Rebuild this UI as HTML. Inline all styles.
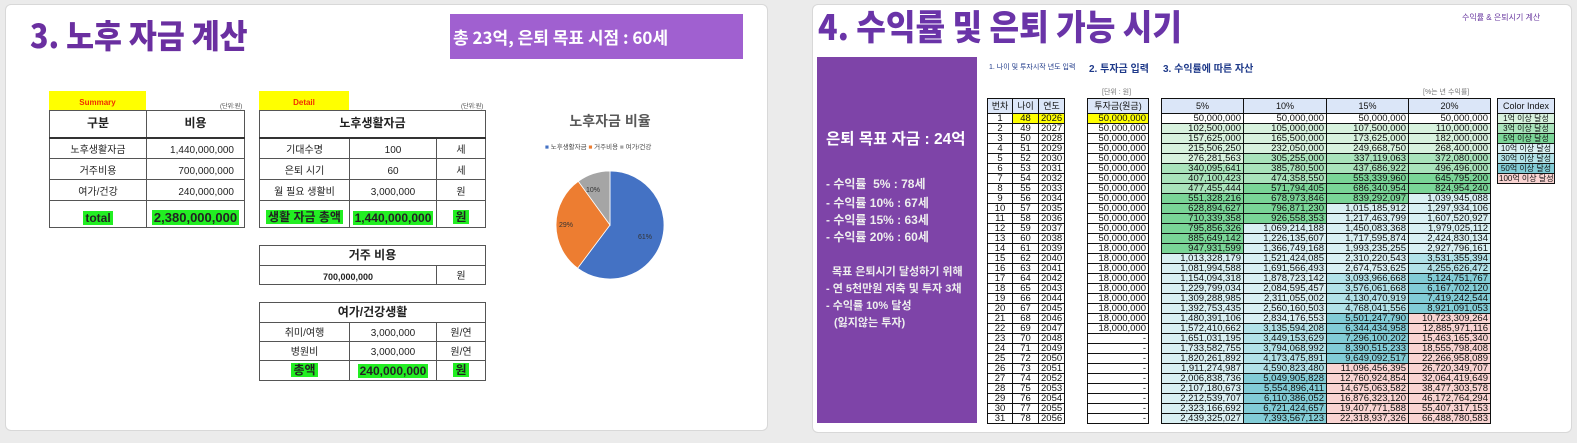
<!DOCTYPE html>
<html><head><meta charset="utf-8"><style>
*{margin:0;padding:0;box-sizing:border-box}
body{width:1577px;height:443px;background:#ebebeb;position:relative;overflow:hidden;font-family:"Liberation Sans","Noto Sans CJK KR",sans-serif}
.card{position:absolute;background:#fff;border:1px solid #d8d8d8;border-radius:6px}
.abs{position:absolute}
table{border-collapse:collapse;position:absolute;table-layout:fixed}
.lt td{border:1px solid #555;font-size:10px;text-align:center;color:#222;vertical-align:bottom;padding-bottom:2px}
.lt .h td{font-weight:bold;font-size:12px;border-bottom:2px solid #333;vertical-align:middle}
.g{background:#22ee22;font-weight:bold;font-size:12px;padding:0 2px}
.rt td{border:1px solid #111;font-size:9.5px;height:10px;line-height:9px;padding:0 2px;color:#111;white-space:nowrap;overflow:hidden}
.rt .hd td{background:#dbe6f8;height:15px;font-size:9px;text-align:center;border:1.5px solid #111}
.c td{text-align:center}
.r td{text-align:right}
.y{background:#ffff00}
.a{background:#d8f2de}.b{background:#a9e3bb}.c5{background:#7ad597}.d{background:#d9f0f3}.e{background:#b2e2e8}.f{background:#82ccd6}.p{background:#f9d4d2}
.pl{color:#eee;font-weight:bold;font-size:12px;position:absolute;left:826px;white-space:nowrap}
.ci td{font-size:8px;padding:0 1px}
</style></head><body>
<div class="card" style="left:5px;top:4px;width:763px;height:427px"></div>
<div class="card" style="left:812px;top:4px;width:760px;height:429px"></div>

<div class="abs" style="left:30px;top:12px;font-size:33px;font-weight:900;color:#6a2fa0;font-family:'Noto Sans CJK KR',sans-serif;transform:scaleX(.92);transform-origin:left;white-space:nowrap;line-height:44px">3. 노후 자금 계산</div>
<div class="abs" style="left:450px;top:14px;width:293px;height:45px;background:#a060d0;color:#fff;font-weight:bold;font-size:17px;line-height:45px;padding-left:3px;white-space:nowrap;font-family:'Noto Sans CJK KR',sans-serif">총 23억, 은퇴 목표 시점 : 60세</div>

<div class="abs" style="left:49px;top:91px;width:97px;height:19px;background:#ff0;color:#f03000;font-size:8px;font-weight:bold;text-align:center;line-height:24px">Summary</div>
<div class="abs" style="left:220px;top:101px;font-size:6px;color:#444">(단위:원)</div>
<table class="lt" style="left:49px;top:110px;width:195px">
<col style="width:97px"><col style="width:98px">
<tr class="h" style="height:27px"><td>구분</td><td>비용</td></tr>
<tr style="height:21px"><td>노후생활자금</td><td style="text-align:right;padding-right:10px">1,440,000,000</td></tr>
<tr style="height:21px"><td>거주비용</td><td style="text-align:right;padding-right:10px">700,000,000</td></tr>
<tr style="height:21px"><td>여가/건강</td><td style="text-align:right;padding-right:10px">240,000,000</td></tr>
<tr style="height:27px"><td><span class="g">total</span></td><td><span class="g" style="font-size:13px">2,380,000,000</span></td></tr>
</table>

<div class="abs" style="left:259px;top:91px;width:90px;height:19px;background:#ff0;color:#f03000;font-size:8px;font-weight:bold;text-align:center;line-height:24px">Detail</div>
<div class="abs" style="left:461px;top:101px;font-size:6px;color:#444">(단위:원)</div>
<table class="lt" style="left:259px;top:110px;width:226px">
<col style="width:90px"><col style="width:87px"><col style="width:49px">
<tr class="h" style="height:27px"><td colspan="3">노후생활자금</td></tr>
<tr style="height:21px"><td>기대수명</td><td>100</td><td>세</td></tr>
<tr style="height:21px"><td>은퇴 시기</td><td>60</td><td>세</td></tr>
<tr style="height:21px"><td>월 필요 생활비</td><td>3,000,000</td><td>원</td></tr>
<tr style="height:27px"><td><span class="g">생활 자금 총액</span></td><td><span class="g">1,440,000,000</span></td><td><span class="g">원</span></td></tr>
</table>

<table class="lt" style="left:259px;top:245px;width:226px">
<col style="width:177px"><col style="width:49px">
<tr style="height:19px"><td colspan="2" style="font-weight:bold;font-size:12px">거주 비용</td></tr>
<tr style="height:19px"><td style="font-weight:bold;font-size:9px">700,000,000</td><td>원</td></tr>
</table>

<table class="lt" style="left:259px;top:302px;width:226px">
<col style="width:90px"><col style="width:87px"><col style="width:49px">
<tr style="height:20px"><td colspan="3" style="font-weight:bold;font-size:12px">여가/건강생활</td></tr>
<tr style="height:19px"><td>취미/여행</td><td>3,000,000</td><td>원/연</td></tr>
<tr style="height:19px"><td>병원비</td><td>3,000,000</td><td>원/연</td></tr>
<tr style="height:20px"><td><span class="g">총액</span></td><td><span class="g">240,000,000</span></td><td><span class="g">원</span></td></tr>
</table>

<div class="abs" style="left:540px;top:111px;width:140px;text-align:center;font-size:14px;font-weight:bold;color:#595959">노후자금 비율</div>
<div class="abs" style="left:545px;top:141px;font-size:6.5px;color:#444;white-space:nowrap"><span style="color:#4472c4">■</span> 노후생활자금 <span style="color:#ed7d31">■</span> 거주비용 <span style="color:#a5a5a5">■</span> 여가/건강</div>
<svg class="abs" style="left:550px;top:165px" width="120" height="120" viewBox="0 0 120 120">
<path d="M60 60 L60 6 A54 54 0 1 1 27.6 103.2 Z" fill="#4472c4" stroke="#fff" stroke-width=".8"/>
<path d="M60 60 L27.6 103.2 A54 54 0 0 1 28.3 16.3 Z" fill="#ed7d31" stroke="#fff" stroke-width=".8"/>
<path d="M60 60 L28.3 16.3 A54 54 0 0 1 60 6 Z" fill="#a5a5a5" stroke="#fff" stroke-width=".8"/>
<text x="88" y="74" font-size="7" fill="#333" font-family="Liberation Sans">61%</text>
<text x="9" y="62" font-size="7" fill="#333" font-family="Liberation Sans">29%</text>
<text x="36" y="27" font-size="7" fill="#333" font-family="Liberation Sans">10%</text>
</svg>

<div class="abs" style="left:818px;top:4px;font-size:35px;font-weight:900;color:#6a34a8;font-family:'Noto Sans CJK KR',sans-serif;white-space:nowrap;line-height:44px;transform:scaleX(.92);transform-origin:left">4. 수익률 및 은퇴 가능 시기</div>
<div class="abs" style="left:1462px;top:12px;font-size:8px;color:#6a3aa0;white-space:nowrap">수익률 &amp; 은퇴시기 계산</div>

<div class="abs" style="left:817px;top:57px;width:160px;height:366px;background:#7e44a8"></div>
<div class="pl" style="top:127px;font-size:15.5px;color:#fff">은퇴 목표 자금 : 24억</div>
<div class="pl" style="top:175px">- 수익률&nbsp;&nbsp;5% : 78세</div>
<div class="pl" style="top:194px">- 수익률 10% : 67세</div>
<div class="pl" style="top:211px">- 수익률 15% : 63세</div>
<div class="pl" style="top:228px">- 수익률 20% : 60세</div>
<div class="pl" style="top:263px;left:832px;font-size:11px">목표 은퇴시기 달성하기 위해</div>
<div class="pl" style="top:280px;font-size:11px">- 연 5천만원 저축 및 투자 3채</div>
<div class="pl" style="top:297px;font-size:11px">- 수익률 10% 달성</div>
<div class="pl" style="top:314px;left:834px;font-size:11px">(잃지않는 투자)</div>

<div class="abs" style="left:989px;top:62px;font-size:7px;color:#1f3a8a;white-space:nowrap">1. 나이 및 투자시작 년도 입력</div>
<div class="abs" style="left:1089px;top:60px;font-size:10px;font-weight:bold;color:#1f3a8a;white-space:nowrap">2. 투자금 입력</div>
<div class="abs" style="left:1163px;top:60px;font-size:10px;font-weight:bold;color:#1f3a8a;white-space:nowrap">3. 수익률에 따른 자산</div>
<div class="abs" style="left:1102px;top:87px;font-size:7px;color:#777">[단위 : 원]</div>
<div class="abs" style="left:1423px;top:87px;font-size:7px;color:#777">[%는 년 수익률]</div>

<table class="rt c" style="left:987px;top:98px;width:77px">
<col style="width:25px"><col style="width:26px"><col style="width:26px">
<tr class="hd"><td>번차</td><td>나이</td><td>연도</td></tr>
<tr><td>1</td><td class="y">48</td><td class="y">2026</td></tr>
<tr><td>2</td><td>49</td><td>2027</td></tr><tr><td>3</td><td>50</td><td>2028</td></tr><tr><td>4</td><td>51</td><td>2029</td></tr><tr><td>5</td><td>52</td><td>2030</td></tr><tr><td>6</td><td>53</td><td>2031</td></tr><tr><td>7</td><td>54</td><td>2032</td></tr><tr><td>8</td><td>55</td><td>2033</td></tr><tr><td>9</td><td>56</td><td>2034</td></tr><tr><td>10</td><td>57</td><td>2035</td></tr><tr><td>11</td><td>58</td><td>2036</td></tr><tr><td>12</td><td>59</td><td>2037</td></tr><tr><td>13</td><td>60</td><td>2038</td></tr><tr><td>14</td><td>61</td><td>2039</td></tr><tr><td>15</td><td>62</td><td>2040</td></tr><tr><td>16</td><td>63</td><td>2041</td></tr><tr><td>17</td><td>64</td><td>2042</td></tr><tr><td>18</td><td>65</td><td>2043</td></tr><tr><td>19</td><td>66</td><td>2044</td></tr><tr><td>20</td><td>67</td><td>2045</td></tr><tr><td>21</td><td>68</td><td>2046</td></tr><tr><td>22</td><td>69</td><td>2047</td></tr><tr><td>23</td><td>70</td><td>2048</td></tr><tr><td>24</td><td>71</td><td>2049</td></tr><tr><td>25</td><td>72</td><td>2050</td></tr><tr><td>26</td><td>73</td><td>2051</td></tr><tr><td>27</td><td>74</td><td>2052</td></tr><tr><td>28</td><td>75</td><td>2053</td></tr><tr><td>29</td><td>76</td><td>2054</td></tr><tr><td>30</td><td>77</td><td>2055</td></tr><tr><td>31</td><td>78</td><td>2056</td></tr>
</table>

<table class="rt r" style="left:1087px;top:98px;width:62px">
<tr class="hd"><td>투자금(원금)</td></tr>
<tr><td class="y">50,000,000</td></tr>
<tr><td>50,000,000</td></tr><tr><td>50,000,000</td></tr><tr><td>50,000,000</td></tr><tr><td>50,000,000</td></tr><tr><td>50,000,000</td></tr><tr><td>50,000,000</td></tr><tr><td>50,000,000</td></tr><tr><td>50,000,000</td></tr><tr><td>50,000,000</td></tr><tr><td>50,000,000</td></tr><tr><td>50,000,000</td></tr><tr><td>50,000,000</td></tr>
<tr><td>18,000,000</td></tr><tr><td>18,000,000</td></tr><tr><td>18,000,000</td></tr><tr><td>18,000,000</td></tr><tr><td>18,000,000</td></tr><tr><td>18,000,000</td></tr><tr><td>18,000,000</td></tr><tr><td>18,000,000</td></tr><tr><td>18,000,000</td></tr>
<tr><td>-</td></tr><tr><td>-</td></tr><tr><td>-</td></tr><tr><td>-</td></tr><tr><td>-</td></tr><tr><td>-</td></tr><tr><td>-</td></tr><tr><td>-</td></tr><tr><td>-</td></tr>
</table>

<table class="rt r" style="left:1161px;top:98px;width:329px">
<col style="width:82px"><col style="width:83px"><col style="width:82px"><col style="width:82px">
<tr class="hd"><td>5%</td><td>10%</td><td>15%</td><td>20%</td></tr>
<tr><td>50,000,000</td><td>50,000,000</td><td>50,000,000</td><td>50,000,000</td></tr>
<tr><td class="a">102,500,000</td><td class="a">105,000,000</td><td class="a">107,500,000</td><td class="a">110,000,000</td></tr>
<tr><td class="a">157,625,000</td><td class="a">165,500,000</td><td class="a">173,625,000</td><td class="a">182,000,000</td></tr>
<tr><td class="a">215,506,250</td><td class="a">232,050,000</td><td class="a">249,668,750</td><td class="a">268,400,000</td></tr>
<tr><td class="a">276,281,563</td><td class="b">305,255,000</td><td class="b">337,119,063</td><td class="b">372,080,000</td></tr>
<tr><td class="b">340,095,641</td><td class="b">385,780,500</td><td class="b">437,686,922</td><td class="b">496,496,000</td></tr>
<tr><td class="b">407,100,423</td><td class="b">474,358,550</td><td class="c5">553,339,960</td><td class="c5">645,795,200</td></tr>
<tr><td class="b">477,455,444</td><td class="c5">571,794,405</td><td class="c5">686,340,954</td><td class="c5">824,954,240</td></tr>
<tr><td class="c5">551,328,216</td><td class="c5">678,973,846</td><td class="c5">839,292,097</td><td class="d">1,039,945,088</td></tr>
<tr><td class="c5">628,894,627</td><td class="c5">796,871,230</td><td class="d">1,015,185,912</td><td class="d">1,297,934,106</td></tr>
<tr><td class="c5">710,339,358</td><td class="c5">926,558,353</td><td class="d">1,217,463,799</td><td class="d">1,607,520,927</td></tr>
<tr><td class="c5">795,856,326</td><td class="d">1,069,214,188</td><td class="d">1,450,083,368</td><td class="d">1,979,025,112</td></tr>
<tr><td class="c5">885,649,142</td><td class="d">1,226,135,607</td><td class="d">1,717,595,874</td><td class="d">2,424,830,134</td></tr>
<tr><td class="c5">947,931,599</td><td class="d">1,366,749,168</td><td class="d">1,993,235,255</td><td class="d">2,927,796,161</td></tr>
<tr><td class="d">1,013,328,179</td><td class="d">1,521,424,085</td><td class="d">2,310,220,543</td><td class="e">3,531,355,394</td></tr>
<tr><td class="d">1,081,994,588</td><td class="d">1,691,566,493</td><td class="d">2,674,753,625</td><td class="e">4,255,626,472</td></tr>
<tr><td class="d">1,154,094,318</td><td class="d">1,878,723,142</td><td class="e">3,093,966,668</td><td class="f">5,124,751,767</td></tr>
<tr><td class="d">1,229,799,034</td><td class="d">2,084,595,457</td><td class="e">3,576,061,668</td><td class="f">6,167,702,120</td></tr>
<tr><td class="d">1,309,288,985</td><td class="d">2,311,055,002</td><td class="e">4,130,470,919</td><td class="f">7,419,242,544</td></tr>
<tr><td class="d">1,392,753,435</td><td class="d">2,560,160,503</td><td class="e">4,768,041,556</td><td class="f">8,921,091,053</td></tr>
<tr><td class="d">1,480,391,106</td><td class="d">2,834,176,553</td><td class="f">5,501,247,790</td><td class="p">10,723,309,264</td></tr>
<tr><td class="d">1,572,410,662</td><td class="e">3,135,594,208</td><td class="f">6,344,434,958</td><td class="p">12,885,971,116</td></tr>
<tr><td class="d">1,651,031,195</td><td class="e">3,449,153,629</td><td class="f">7,296,100,202</td><td class="p">15,463,165,340</td></tr>
<tr><td class="d">1,733,582,755</td><td class="e">3,794,068,992</td><td class="f">8,390,515,233</td><td class="p">18,555,798,408</td></tr>
<tr><td class="d">1,820,261,892</td><td class="e">4,173,475,891</td><td class="f">9,649,092,517</td><td class="p">22,266,958,089</td></tr>
<tr><td class="d">1,911,274,987</td><td class="e">4,590,823,480</td><td class="p">11,096,456,395</td><td class="p">26,720,349,707</td></tr>
<tr><td class="d">2,006,838,736</td><td class="f">5,049,905,828</td><td class="p">12,760,924,854</td><td class="p">32,064,419,649</td></tr>
<tr><td class="d">2,107,180,673</td><td class="f">5,554,896,411</td><td class="p">14,675,063,582</td><td class="p">38,477,303,578</td></tr>
<tr><td class="d">2,212,539,707</td><td class="f">6,110,386,052</td><td class="p">16,876,323,120</td><td class="p">46,172,764,294</td></tr>
<tr><td class="d">2,323,166,692</td><td class="f">6,721,424,657</td><td class="p">19,407,771,588</td><td class="p">55,407,317,153</td></tr>
<tr><td class="d">2,439,325,027</td><td class="f">7,393,567,123</td><td class="p">22,318,937,326</td><td class="p">66,488,780,583</td></tr>
</table>

<table class="rt c ci" style="left:1497px;top:98px;width:58px">
<tr class="hd"><td>Color Index</td></tr>
<tr><td class="a">1억 이상 달성</td></tr>
<tr><td class="b">3억 이상 달성</td></tr>
<tr><td class="c5">5억 이상 달성</td></tr>
<tr><td class="d">10억 이상 달성</td></tr>
<tr><td class="e">30억 이상 달성</td></tr>
<tr><td class="f">50억 이상 달성</td></tr>
<tr><td class="p">100억 이상 달성</td></tr>
</table>
</body></html>
